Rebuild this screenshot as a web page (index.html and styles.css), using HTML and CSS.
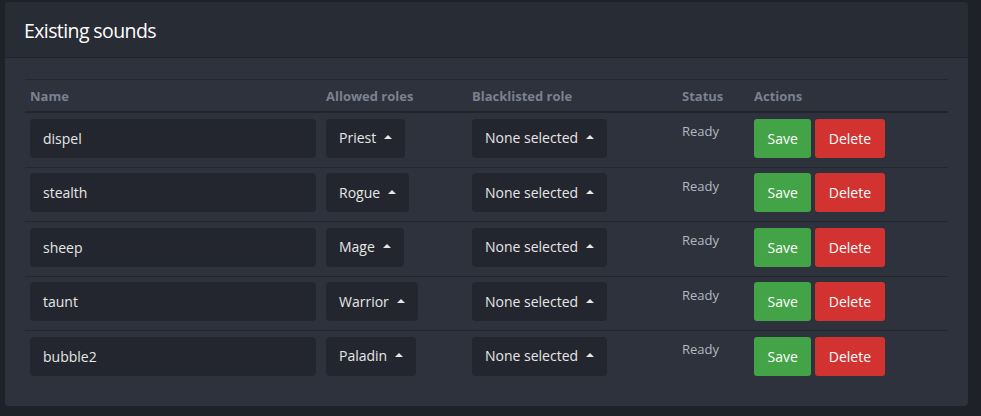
FILE: index.html
```html
<!DOCTYPE html>
<html>
<head>
<meta charset="utf-8">
<link rel="stylesheet" href="styles.css">
</head>
<body>
<div class="card">
  <div class="card-header">Existing sounds</div>
  <div class="card-body">
    <table class="sounds">
      <colgroup>
        <col class="c-name"><col class="c-allowed"><col class="c-black"><col class="c-status"><col class="c-actions">
      </colgroup>
      <thead>
        <tr><th>Name</th><th>Allowed roles</th><th>Blacklisted role</th><th>Status</th><th>Actions</th></tr>
      </thead>
      <tbody>
        <tr>
          <td><div class="input">dispel</div></td>
          <td><div class="dropdown">Priest <span class="caret"></span></div></td>
          <td><div class="dropdown">None selected <span class="caret"></span></div></td>
          <td class="status">Ready</td>
          <td><div class="actions"><button class="btn save">Save</button><button class="btn delete">Delete</button></div></td>
        </tr>
        <tr>
          <td><div class="input">stealth</div></td>
          <td><div class="dropdown">Rogue <span class="caret"></span></div></td>
          <td><div class="dropdown">None selected <span class="caret"></span></div></td>
          <td class="status">Ready</td>
          <td><div class="actions"><button class="btn save">Save</button><button class="btn delete">Delete</button></div></td>
        </tr>
        <tr>
          <td><div class="input">sheep</div></td>
          <td><div class="dropdown">Mage <span class="caret"></span></div></td>
          <td><div class="dropdown">None selected <span class="caret"></span></div></td>
          <td class="status">Ready</td>
          <td><div class="actions"><button class="btn save">Save</button><button class="btn delete">Delete</button></div></td>
        </tr>
        <tr>
          <td><div class="input">taunt</div></td>
          <td><div class="dropdown">Warrior <span class="caret"></span></div></td>
          <td><div class="dropdown">None selected <span class="caret"></span></div></td>
          <td class="status">Ready</td>
          <td><div class="actions"><button class="btn save">Save</button><button class="btn delete">Delete</button></div></td>
        </tr>
        <tr>
          <td><div class="input">bubble2</div></td>
          <td><div class="dropdown">Paladin <span class="caret"></span></div></td>
          <td><div class="dropdown">None selected <span class="caret"></span></div></td>
          <td class="status">Ready</td>
          <td><div class="actions"><button class="btn save">Save</button><button class="btn delete">Delete</button></div></td>
        </tr>
      </tbody>
    </table>
  </div>
</div>
</body>
</html>
```
FILE: styles.css
```css
html, body {
  margin: 0;
  background: #1f2128;
  height: 100%;
}
body {
  padding: 2px 13px 0 5px;
  box-sizing: border-box;
  font-family: "Open Sans", "Noto Sans", sans-serif;
  color: #e4e4e4;
}
.card {
  background: #2d323c;
  border-radius: 4px;
  overflow: hidden;
}
.card-header {
  background: #282c34;
  border-bottom: 1px solid #1f2228;
  height: 56px;
  box-sizing: border-box;
  padding: 15px 19px 0;
  font-size: 19.5px;
  color: #ffffff;
  letter-spacing: -0.6px;
}
.card-body {
  padding: 21px 20px 21px;
}
.sounds {
  width: 100%;
  border-collapse: separate;
  border-spacing: 0;
  table-layout: fixed;
}
.c-name { width: 296px; }
.c-allowed { width: 146px; }
.c-black { width: 210px; }
.c-status { width: 72px; }
.c-actions { width: 199px; }
.sounds th {
  text-align: left;
  font-size: 13px;
  line-height: 18px;
  font-weight: 700;
  color: #7b8190;
  padding: 6.5px 5px 6.5px;
  border-top: 1px solid #23262d;
  border-bottom: 2px solid #22252c;
}
.sounds td {
  padding: 5.5px 5px 9px;
  vertical-align: top;
  border-top: 1px solid #23262d;
}
.sounds tbody tr:first-child td { border-top: none; }
.input, .dropdown {
  background: #23262e;
  border-radius: 4px;
  height: 39px;
  box-sizing: border-box;
  font-size: 14px;
  line-height: 39px;
  padding: 0 13px;
  color: #e6e6e6;
}
.dropdown {
  display: flex;
  width: fit-content;
  align-items: center;
  gap: 6px;
  line-height: 20px;
}
.caret {
  display: block;
  width: 0;
  height: 0;
  border-left: 4px solid transparent;
  border-right: 4px solid transparent;
  border-bottom: 4px solid #e6e6e6;
  margin-left: 2px;
  margin-bottom: 2px;
}
.status {
  font-size: 13px;
  color: #b4b8c0;
  line-height: 20px;
}
.sounds td.status { padding-top: 8px; }
.actions {
  display: flex;
  gap: 4px;
}
.btn {
  border: none;
  border-radius: 3px;
  height: 39px;
  font-family: inherit;
  font-size: 14px;
  color: #ffffff;
  padding: 0 13.5px;
  cursor: pointer;
}
.save { background: #43a447; }
.delete { background: #d33330; }
```
